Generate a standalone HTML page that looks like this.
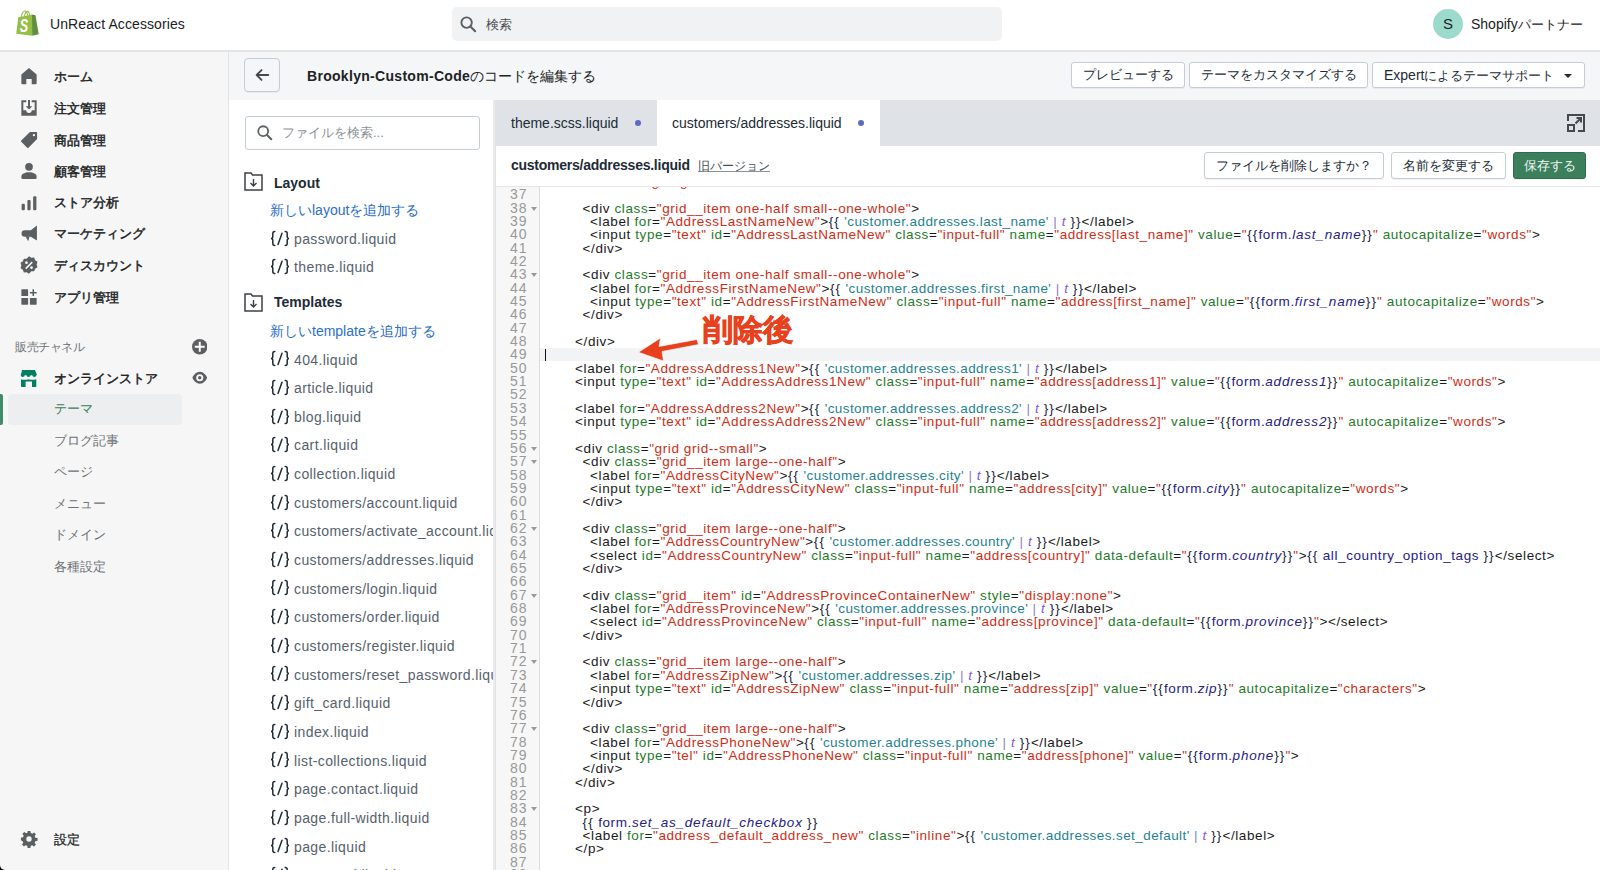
<!DOCTYPE html>
<html lang="ja"><head><meta charset="utf-8">
<style>
*{box-sizing:border-box;margin:0;padding:0}
html,body{width:1600px;height:870px;overflow:hidden;background:#fff}
body{font-family:"Liberation Sans",sans-serif;color:#202223;position:relative}
.abs{position:absolute}
#top{position:absolute;left:0;top:0;width:1600px;height:52px;background:#fff;border-bottom:2px solid #e2e3e5;z-index:2}
#side{position:absolute;left:0;top:52px;width:229px;height:818px;background:#f6f6f7;border-right:1px solid #e1e3e5}
.nv{position:absolute;left:0;height:20px;width:228px;font-size:13px;font-weight:400;line-height:20px;color:#202223}
.nv span{position:absolute;left:54px;top:1px;-webkit-text-stroke:.45px #202223}
.ni{position:absolute;left:19.5px;top:1px;width:18px;height:18px;fill:#5c5f62}
.sb{position:absolute;left:54px;height:20px;line-height:20px;font-size:13px;color:#6d7175}
#hdr{position:absolute;left:229px;top:52px;width:1371px;height:48px;background:#f4f6f8}
.btn{position:absolute;height:26px;border:1px solid #c4cdd5;border-radius:3px;background:#fff;font-size:13px;line-height:24px;color:#212b36;text-align:center;box-shadow:0 1px 0 rgba(22,29,37,.05)}
#files{position:absolute;left:229px;top:100px;width:266px;height:770px;background:#fff}
.fi{position:absolute;left:270px;height:20px;line-height:20px;white-space:nowrap;width:225px;overflow:hidden}
.fi svg{position:absolute;left:0;top:.8px;width:20px;height:17px}
.fi .fn{position:absolute;left:24px;top:0;font-size:14px;color:#56616d;letter-spacing:.4px}
#ed{position:absolute;left:495px;top:100px;width:1105px;height:770px;background:#fff;border-left:1px solid #dfe3e8}
#tabs{position:absolute;left:495px;top:100px;width:1105px;height:46px;background:#dfe3e8}
.tab{position:absolute;top:100px;height:46px;font-size:14px;line-height:46px;color:#212b36}
.dot{position:absolute;width:6px;height:6px;border-radius:3px;background:#5c6ac4}
#gut{position:absolute;left:496px;top:187px;width:44px;height:683px;background:#f7f7f7;border-right:1px solid #ddd}
.gn{position:absolute;left:496px;width:31.4px;text-align:right;height:13.35px;line-height:13.35px;font-size:14px;letter-spacing:.9px;color:#999;font-family:"Liberation Sans",sans-serif}
.fd{position:absolute;left:531px;width:0;height:0;margin-top:5px;border-left:3.5px solid transparent;border-right:3.5px solid transparent;border-top:4px solid #999}
#code{position:absolute;left:0;top:187px;width:1600px;height:683px;overflow:hidden}
#codein{position:absolute;left:0;top:-187px;width:1600px;height:870px}
.cl{position:absolute;white-space:pre;height:13.35px;line-height:13.35px;font-size:13.5px;letter-spacing:.6px;color:#1a1a1a}
.cl i{font-style:normal}
.tg,.eq{color:#1a1a1a}
.at{color:#1e7b2a}
.st{color:#d22c14}
.lb{color:#1b1f3b;letter-spacing:1.1px}
.ls{color:#1f8291;letter-spacing:.42px}
.pp{color:#8d7fc0}
.fl{color:#8456ec;font-style:italic!important}
.lv{color:#25208a}
.lp{color:#25208a;font-style:italic!important;letter-spacing:.8px}
</style></head><body>
<div id="top">
  <svg class="abs" style="left:10px;top:5px;width:35px;height:37px" viewBox="10 5 35 37">
    <path d="M18.3 17.2 32 14.5 32.2 35.8 16.2 33.8z" fill="#95bf47"/>
    <path d="M32 14.5 35.5 15.3 38.7 34.2 32.2 35.8z" fill="#5e8e3e"/>
    <path d="M21.3 16.8c.6-3.5 2-5.8 3.6-5.8 1.5 0 2.4 1.6 2.6 4.3M24.5 16c.5-2.8 1.5-4.6 2.7-4.6s2.1 1.4 2.3 3.7" fill="none" stroke="#95bf47" stroke-width="1.1"/>
    <text transform="translate(19.8 32) scale(.68 1)" font-family="Liberation Sans" font-weight="700" font-style="italic" font-size="18.5" fill="#fff">S</text>
  </svg>
  <div class="abs" style="left:50px;top:14px;font-size:14px;line-height:20px;color:#202223;letter-spacing:.1px">UnReact Accessories</div>
  <div class="abs" style="left:452px;top:7px;width:550px;height:34px;border-radius:5px;background:#f1f2f3"></div>
  <svg class="abs" style="left:459px;top:15px;width:19px;height:19px" viewBox="0 0 20 20"><circle cx="8" cy="8" r="5.5" fill="none" stroke="#5c5f62" stroke-width="2"/><path d="M12 12l5 5" stroke="#5c5f62" stroke-width="2.2" stroke-linecap="round"/></svg>
  <div class="abs" style="left:486px;top:15px;font-size:13px;line-height:20px;color:#4a4d50">検索</div>
  <div class="abs" style="left:1433px;top:9px;width:30px;height:30px;border-radius:15px;background:#9cdbcc;text-align:center;line-height:30px;font-size:15px;color:#202223">S</div>
  <div class="abs" style="left:1471px;top:14px;font-size:14px;line-height:20px;color:#202223;white-space:nowrap">Shopify<span style="font-size:13px">パートナー</span></div>
</div>
<div id="side">
</div>
<div class="nv" style="top:66px"><svg class="ni" viewBox="0 0 20 20"><path d="M10 1 1.5 8.2V18a1.2 1.2 0 0 0 1.2 1.2H7v-6h6v6h4.3a1.2 1.2 0 0 0 1.2-1.2V8.2z"/></svg><span>ホーム</span></div>
<div class="nv" style="top:98px"><svg class="ni" viewBox="0 0 20 20"><path d="M1.5 1.5H7v2.2H3.7v8.8H7a3 3 0 0 0 6 0h3.3V3.7H13V1.5h5.5v17h-17z"/><path d="M8.9 1h2.2v7h2.6L10 11.8 6.3 8h2.6z"/></svg><span>注文管理</span></div>
<div class="nv" style="top:130px"><svg class="ni" viewBox="0 0 20 20"><path d="M11 1h7.2a.8.8 0 0 1 .8.8V9l-9.6 9.6a1 1 0 0 1-1.4 0L1.4 12a1 1 0 0 1 0-1.4zM15.5 3.2a1.3 1.3 0 1 0 0 2.6 1.3 1.3 0 0 0 0-2.6z" fill-rule="evenodd"/></svg><span>商品管理</span></div>
<div class="nv" style="top:161px"><svg class="ni" viewBox="0 0 20 20"><circle cx="10" cy="5.3" r="4.3"/><path d="M1.5 16.5c0-3.2 3.8-5 8.5-5s8.5 1.8 8.5 5v1a1.5 1.5 0 0 1-1.5 1.5H3a1.5 1.5 0 0 1-1.5-1.5z"/></svg><span>顧客管理</span></div>
<div class="nv" style="top:192px"><svg class="ni" viewBox="0 0 20 20"><rect x="1.8" y="12" width="3.6" height="7.3" rx="1.2"/><rect x="8.2" y="7.8" width="3.6" height="11.5" rx="1.2"/><rect x="14.6" y="3.6" width="3.6" height="15.7" rx="1.2"/></svg><span>ストア分析</span></div>
<div class="nv" style="top:223px"><svg class="ni" viewBox="0 0 20 20"><path d="M18.8 1.8v16.4l-6.8-4H5.3a3.6 3.6 0 0 1 0-7.2H12z"/><path d="M6.2 14h4.4l-1.5 5.2z"/></svg><span>マーケティング</span></div>
<div class="nv" style="top:255px"><svg class="ni" viewBox="0 0 20 20"><path d="M10 .2l2.6 1.7 3.1-.1 1.1 2.9 2.6 1.7-.9 3 .9 3-2.6 1.7-1.1 2.9-3.1-.1L10 19.8l-2.6-1.7-3.1.1-1.1-2.9L.6 13.6l.9-3-.9-3 2.6-1.7 1.1-2.9 3.1.1z"/><path d="M13 6.2l1.2 1.2-7.2 7.2-1.2-1.2z" fill="#f6f6f7"/><circle cx="7.2" cy="7.4" r="1.5" fill="#f6f6f7"/><circle cx="12.8" cy="13" r="1.5" fill="#f6f6f7"/></svg><span>ディスカウント</span></div>
<div class="nv" style="top:287px"><svg class="ni" viewBox="0 0 20 20"><rect x="1.5" y="1.5" width="7.5" height="7.5" rx=".6"/><rect x="1.5" y="11" width="7.5" height="7.5" rx=".6"/><rect x="11" y="11" width="7.5" height="7.5" rx=".6"/><path d="M13.9 1.5h1.7v2.9h2.9v1.7h-2.9V9h-1.7V6.1H11V4.4h2.9z"/></svg><span>アプリ管理</span></div>

<div class="abs" style="left:15px;top:337px;font-size:12px;letter-spacing:-.4px;line-height:20px;color:#6d7175">販売チャネル</div>
<svg class="abs" style="left:191.5px;top:339px;width:15.5px;height:15.5px" viewBox="0 0 20 20"><circle cx="10" cy="10" r="10" fill="#5c5f62"/><path d="M10 3.6v12.8M3.6 10h12.8" stroke="#fff" stroke-width="2.5"/></svg>
<div class="nv" style="top:368px"><svg class="abs" style="left:20px;top:1px;width:18px;height:19px;fill:#008060" viewBox="20 369 18 19"><path d="M22 370h13l1.8 4.6v.6h-15.6v-.6z"/><circle cx="22.7" cy="375" r="2"/><circle cx="28.5" cy="375" r="2"/><circle cx="34.3" cy="375" r="2"/><path d="M21 379.2c2.5.8 5 .8 7.6 0 2.5.8 5 .8 7.7 0v7.3c0 .3-.2.5-.5.5H32v-5.6h-6.4V387h-4.1c-.3 0-.5-.2-.5-.5z"/></svg><span>オンラインストア</span></div>
<svg class="abs" style="left:191.5px;top:369.5px;width:15.5px;height:15.5px" viewBox="0 0 20 20"><path d="M10 2.4C5 2.4 1.2 7.5.6 10c.6 2.5 4.4 7.6 9.4 7.6s8.8-5.1 9.4-7.6C18.8 7.5 15 2.4 10 2.4z" fill="#5c5f62"/><circle cx="10" cy="10" r="4.6" fill="#f6f6f7"/><circle cx="10" cy="10" r="2.2" fill="#5c5f62"/></svg>
<div class="abs" style="left:0;top:394px;width:3px;height:31px;background:#3f8c68;border-radius:0 2px 2px 0"></div>
<div class="abs" style="left:8px;top:394px;width:174px;height:31px;background:#edeeef;border-radius:4px"></div>
<div class="sb" style="top:399px;color:#3f7d5a">テーマ</div>
<div class="sb" style="top:430.5px">ブログ記事</div><div class="sb" style="top:462px">ページ</div><div class="sb" style="top:493.5px">メニュー</div><div class="sb" style="top:525px">ドメイン</div><div class="sb" style="top:556.5px">各種設定</div>
<div class="nv" style="top:829px"><svg class="ni" viewBox="0 0 20 20"><path d="M8.5 1h3l.5 2.4 1.6.7 2-1.4 2.1 2.1-1.4 2 .7 1.7 2.5.5v3l-2.5.5-.7 1.7 1.4 2-2.1 2.1-2-1.4-1.6.7-.5 2.4h-3l-.5-2.4-1.7-.7-2 1.4-2.1-2.1 1.4-2-.7-1.7L1 11.5v-3l2.4-.5.7-1.7-1.4-2 2.1-2.1 2 1.4 1.7-.7zM10 7a3 3 0 1 0 0 6 3 3 0 0 0 0-6z" fill-rule="evenodd"/></svg><span style="-webkit-text-stroke:.25px #202223">設定</span></div>
<div class="abs" style="left:0;top:865px;width:5px;height:5px;background:#000"><div style="width:5px;height:5px;background:#f6f6f7;border-bottom-left-radius:5px"></div></div>

<div id="hdr"></div>
<div class="abs" style="left:244px;top:58px;width:36px;height:34px;border:1px solid #c4cdd5;border-radius:4px;box-shadow:0 1px 0 rgba(22,29,37,.05)"></div>
<svg class="abs" style="left:253px;top:66px;width:18px;height:18px" viewBox="0 0 20 20"><path d="M17 10H4M9.5 4.5 4 10l5.5 5.5" fill="none" stroke="#45494d" stroke-width="2" stroke-linecap="round" stroke-linejoin="round"/></svg>
<div class="abs" style="left:307px;top:66px;font-size:14px;line-height:20px;color:#202223;white-space:nowrap"><b style="font-weight:700;letter-spacing:.3px">Brooklyn-Custom-Code</b><span style="font-size:14px">のコードを編集する</span></div>
<div class="btn" style="left:1071px;top:62px;width:114px">プレビューする</div>
<div class="btn" style="left:1189px;top:62px;width:179px">テーマをカスタマイズする</div>
<div class="btn" style="left:1372px;top:62px;width:213px;text-align:left;padding-left:11px"><span style="font-size:14px">Expert</span>によるテーマサポート<span style="position:absolute;left:191px;top:11px;border-left:4px solid transparent;border-right:4px solid transparent;border-top:4px solid #212b36"></span></div>

<div id="files"></div>
<div class="abs" style="left:245px;top:116px;width:235px;height:34px;border:1px solid #c4cdd5;border-radius:3px;background:#fff"></div>
<svg class="abs" style="left:256px;top:124px;width:18px;height:18px" viewBox="0 0 20 20"><circle cx="8" cy="8" r="5.5" fill="none" stroke="#5c5f62" stroke-width="2"/><path d="M12 12l5 5" stroke="#5c5f62" stroke-width="2.2" stroke-linecap="round"/></svg>
<div class="abs" style="left:282px;top:123px;font-size:13px;line-height:20px;color:#8c9196">ファイルを検索...</div>

<svg class="abs" style="left:244px;top:172px;width:19px;height:19px" viewBox="0 0 19 19"><path d="M1 1h6l1.5 2H18v15H1z" fill="none" stroke="#3d4246" stroke-width="1.5"/><path d="M9.5 7v7M6.5 11l3 3 3-3" fill="none" stroke="#3d4246" stroke-width="1.4"/></svg>
<div class="abs" style="left:274px;top:173px;font-size:14px;line-height:20px;font-weight:700;color:#212b36">Layout</div>
<div class="abs" style="left:270px;top:200px;font-size:14px;line-height:20px;color:#2c6ecb;white-space:nowrap">新しいlayoutを追加する</div>
<svg class="abs" style="left:244px;top:293px;width:19px;height:19px" viewBox="0 0 19 19"><path d="M1 1h6l1.5 2H18v15H1z" fill="none" stroke="#3d4246" stroke-width="1.5"/><path d="M9.5 7v7M6.5 11l3 3 3-3" fill="none" stroke="#3d4246" stroke-width="1.4"/></svg>
<div class="abs" style="left:274px;top:292px;font-size:14px;line-height:20px;font-weight:700;color:#212b36">Templates</div>
<div class="abs" style="left:270px;top:321px;font-size:14px;line-height:20px;color:#2c6ecb;white-space:nowrap">新しいtemplateを追加する</div>
<div class="fi" style="top:228.8px"><svg viewBox="0 0 20 17"><path d="M4.8 1.5C3.2 1.5 2.8 2.2 2.8 3.5v3c0 1.2-.6 2-1.8 2 1.2 0 1.8.8 1.8 2v3c0 1.3.4 2 2 2M15.2 1.5c1.6 0 2 .7 2 2v3c0 1.2.6 2 1.8 2-1.2 0-1.8.8-1.8 2v3c0 1.3-.4 2-2 2M12 3.2 8 14.5" fill="none" stroke="#212b36" stroke-width="1.5" stroke-linecap="round"/></svg><span class="fn">password.liquid</span></div>
<div class="fi" style="top:257.3px"><svg viewBox="0 0 20 17"><path d="M4.8 1.5C3.2 1.5 2.8 2.2 2.8 3.5v3c0 1.2-.6 2-1.8 2 1.2 0 1.8.8 1.8 2v3c0 1.3.4 2 2 2M15.2 1.5c1.6 0 2 .7 2 2v3c0 1.2.6 2 1.8 2-1.2 0-1.8.8-1.8 2v3c0 1.3-.4 2-2 2M12 3.2 8 14.5" fill="none" stroke="#212b36" stroke-width="1.5" stroke-linecap="round"/></svg><span class="fn">theme.liquid</span></div>
<div class="fi" style="top:349.5px"><svg viewBox="0 0 20 17"><path d="M4.8 1.5C3.2 1.5 2.8 2.2 2.8 3.5v3c0 1.2-.6 2-1.8 2 1.2 0 1.8.8 1.8 2v3c0 1.3.4 2 2 2M15.2 1.5c1.6 0 2 .7 2 2v3c0 1.2.6 2 1.8 2-1.2 0-1.8.8-1.8 2v3c0 1.3-.4 2-2 2M12 3.2 8 14.5" fill="none" stroke="#212b36" stroke-width="1.5" stroke-linecap="round"/></svg><span class="fn">404.liquid</span></div>
<div class="fi" style="top:378.1px"><svg viewBox="0 0 20 17"><path d="M4.8 1.5C3.2 1.5 2.8 2.2 2.8 3.5v3c0 1.2-.6 2-1.8 2 1.2 0 1.8.8 1.8 2v3c0 1.3.4 2 2 2M15.2 1.5c1.6 0 2 .7 2 2v3c0 1.2.6 2 1.8 2-1.2 0-1.8.8-1.8 2v3c0 1.3-.4 2-2 2M12 3.2 8 14.5" fill="none" stroke="#212b36" stroke-width="1.5" stroke-linecap="round"/></svg><span class="fn">article.liquid</span></div>
<div class="fi" style="top:406.8px"><svg viewBox="0 0 20 17"><path d="M4.8 1.5C3.2 1.5 2.8 2.2 2.8 3.5v3c0 1.2-.6 2-1.8 2 1.2 0 1.8.8 1.8 2v3c0 1.3.4 2 2 2M15.2 1.5c1.6 0 2 .7 2 2v3c0 1.2.6 2 1.8 2-1.2 0-1.8.8-1.8 2v3c0 1.3-.4 2-2 2M12 3.2 8 14.5" fill="none" stroke="#212b36" stroke-width="1.5" stroke-linecap="round"/></svg><span class="fn">blog.liquid</span></div>
<div class="fi" style="top:435.4px"><svg viewBox="0 0 20 17"><path d="M4.8 1.5C3.2 1.5 2.8 2.2 2.8 3.5v3c0 1.2-.6 2-1.8 2 1.2 0 1.8.8 1.8 2v3c0 1.3.4 2 2 2M15.2 1.5c1.6 0 2 .7 2 2v3c0 1.2.6 2 1.8 2-1.2 0-1.8.8-1.8 2v3c0 1.3-.4 2-2 2M12 3.2 8 14.5" fill="none" stroke="#212b36" stroke-width="1.5" stroke-linecap="round"/></svg><span class="fn">cart.liquid</span></div>
<div class="fi" style="top:464.1px"><svg viewBox="0 0 20 17"><path d="M4.8 1.5C3.2 1.5 2.8 2.2 2.8 3.5v3c0 1.2-.6 2-1.8 2 1.2 0 1.8.8 1.8 2v3c0 1.3.4 2 2 2M15.2 1.5c1.6 0 2 .7 2 2v3c0 1.2.6 2 1.8 2-1.2 0-1.8.8-1.8 2v3c0 1.3-.4 2-2 2M12 3.2 8 14.5" fill="none" stroke="#212b36" stroke-width="1.5" stroke-linecap="round"/></svg><span class="fn">collection.liquid</span></div>
<div class="fi" style="top:492.8px"><svg viewBox="0 0 20 17"><path d="M4.8 1.5C3.2 1.5 2.8 2.2 2.8 3.5v3c0 1.2-.6 2-1.8 2 1.2 0 1.8.8 1.8 2v3c0 1.3.4 2 2 2M15.2 1.5c1.6 0 2 .7 2 2v3c0 1.2.6 2 1.8 2-1.2 0-1.8.8-1.8 2v3c0 1.3-.4 2-2 2M12 3.2 8 14.5" fill="none" stroke="#212b36" stroke-width="1.5" stroke-linecap="round"/></svg><span class="fn">customers/account.liquid</span></div>
<div class="fi" style="top:521.4px"><svg viewBox="0 0 20 17"><path d="M4.8 1.5C3.2 1.5 2.8 2.2 2.8 3.5v3c0 1.2-.6 2-1.8 2 1.2 0 1.8.8 1.8 2v3c0 1.3.4 2 2 2M15.2 1.5c1.6 0 2 .7 2 2v3c0 1.2.6 2 1.8 2-1.2 0-1.8.8-1.8 2v3c0 1.3-.4 2-2 2M12 3.2 8 14.5" fill="none" stroke="#212b36" stroke-width="1.5" stroke-linecap="round"/></svg><span class="fn">customers/activate_account.liquid</span></div>
<div class="fi" style="top:550.0px"><svg viewBox="0 0 20 17"><path d="M4.8 1.5C3.2 1.5 2.8 2.2 2.8 3.5v3c0 1.2-.6 2-1.8 2 1.2 0 1.8.8 1.8 2v3c0 1.3.4 2 2 2M15.2 1.5c1.6 0 2 .7 2 2v3c0 1.2.6 2 1.8 2-1.2 0-1.8.8-1.8 2v3c0 1.3-.4 2-2 2M12 3.2 8 14.5" fill="none" stroke="#212b36" stroke-width="1.5" stroke-linecap="round"/></svg><span class="fn">customers/addresses.liquid</span></div>
<div class="fi" style="top:578.7px"><svg viewBox="0 0 20 17"><path d="M4.8 1.5C3.2 1.5 2.8 2.2 2.8 3.5v3c0 1.2-.6 2-1.8 2 1.2 0 1.8.8 1.8 2v3c0 1.3.4 2 2 2M15.2 1.5c1.6 0 2 .7 2 2v3c0 1.2.6 2 1.8 2-1.2 0-1.8.8-1.8 2v3c0 1.3-.4 2-2 2M12 3.2 8 14.5" fill="none" stroke="#212b36" stroke-width="1.5" stroke-linecap="round"/></svg><span class="fn">customers/login.liquid</span></div>
<div class="fi" style="top:607.3px"><svg viewBox="0 0 20 17"><path d="M4.8 1.5C3.2 1.5 2.8 2.2 2.8 3.5v3c0 1.2-.6 2-1.8 2 1.2 0 1.8.8 1.8 2v3c0 1.3.4 2 2 2M15.2 1.5c1.6 0 2 .7 2 2v3c0 1.2.6 2 1.8 2-1.2 0-1.8.8-1.8 2v3c0 1.3-.4 2-2 2M12 3.2 8 14.5" fill="none" stroke="#212b36" stroke-width="1.5" stroke-linecap="round"/></svg><span class="fn">customers/order.liquid</span></div>
<div class="fi" style="top:636.0px"><svg viewBox="0 0 20 17"><path d="M4.8 1.5C3.2 1.5 2.8 2.2 2.8 3.5v3c0 1.2-.6 2-1.8 2 1.2 0 1.8.8 1.8 2v3c0 1.3.4 2 2 2M15.2 1.5c1.6 0 2 .7 2 2v3c0 1.2.6 2 1.8 2-1.2 0-1.8.8-1.8 2v3c0 1.3-.4 2-2 2M12 3.2 8 14.5" fill="none" stroke="#212b36" stroke-width="1.5" stroke-linecap="round"/></svg><span class="fn">customers/register.liquid</span></div>
<div class="fi" style="top:664.6px"><svg viewBox="0 0 20 17"><path d="M4.8 1.5C3.2 1.5 2.8 2.2 2.8 3.5v3c0 1.2-.6 2-1.8 2 1.2 0 1.8.8 1.8 2v3c0 1.3.4 2 2 2M15.2 1.5c1.6 0 2 .7 2 2v3c0 1.2.6 2 1.8 2-1.2 0-1.8.8-1.8 2v3c0 1.3-.4 2-2 2M12 3.2 8 14.5" fill="none" stroke="#212b36" stroke-width="1.5" stroke-linecap="round"/></svg><span class="fn">customers/reset_password.liquid</span></div>
<div class="fi" style="top:693.3px"><svg viewBox="0 0 20 17"><path d="M4.8 1.5C3.2 1.5 2.8 2.2 2.8 3.5v3c0 1.2-.6 2-1.8 2 1.2 0 1.8.8 1.8 2v3c0 1.3.4 2 2 2M15.2 1.5c1.6 0 2 .7 2 2v3c0 1.2.6 2 1.8 2-1.2 0-1.8.8-1.8 2v3c0 1.3-.4 2-2 2M12 3.2 8 14.5" fill="none" stroke="#212b36" stroke-width="1.5" stroke-linecap="round"/></svg><span class="fn">gift_card.liquid</span></div>
<div class="fi" style="top:722.0px"><svg viewBox="0 0 20 17"><path d="M4.8 1.5C3.2 1.5 2.8 2.2 2.8 3.5v3c0 1.2-.6 2-1.8 2 1.2 0 1.8.8 1.8 2v3c0 1.3.4 2 2 2M15.2 1.5c1.6 0 2 .7 2 2v3c0 1.2.6 2 1.8 2-1.2 0-1.8.8-1.8 2v3c0 1.3-.4 2-2 2M12 3.2 8 14.5" fill="none" stroke="#212b36" stroke-width="1.5" stroke-linecap="round"/></svg><span class="fn">index.liquid</span></div>
<div class="fi" style="top:750.6px"><svg viewBox="0 0 20 17"><path d="M4.8 1.5C3.2 1.5 2.8 2.2 2.8 3.5v3c0 1.2-.6 2-1.8 2 1.2 0 1.8.8 1.8 2v3c0 1.3.4 2 2 2M15.2 1.5c1.6 0 2 .7 2 2v3c0 1.2.6 2 1.8 2-1.2 0-1.8.8-1.8 2v3c0 1.3-.4 2-2 2M12 3.2 8 14.5" fill="none" stroke="#212b36" stroke-width="1.5" stroke-linecap="round"/></svg><span class="fn">list-collections.liquid</span></div>
<div class="fi" style="top:779.2px"><svg viewBox="0 0 20 17"><path d="M4.8 1.5C3.2 1.5 2.8 2.2 2.8 3.5v3c0 1.2-.6 2-1.8 2 1.2 0 1.8.8 1.8 2v3c0 1.3.4 2 2 2M15.2 1.5c1.6 0 2 .7 2 2v3c0 1.2.6 2 1.8 2-1.2 0-1.8.8-1.8 2v3c0 1.3-.4 2-2 2M12 3.2 8 14.5" fill="none" stroke="#212b36" stroke-width="1.5" stroke-linecap="round"/></svg><span class="fn">page.contact.liquid</span></div>
<div class="fi" style="top:807.9px"><svg viewBox="0 0 20 17"><path d="M4.8 1.5C3.2 1.5 2.8 2.2 2.8 3.5v3c0 1.2-.6 2-1.8 2 1.2 0 1.8.8 1.8 2v3c0 1.3.4 2 2 2M15.2 1.5c1.6 0 2 .7 2 2v3c0 1.2.6 2 1.8 2-1.2 0-1.8.8-1.8 2v3c0 1.3-.4 2-2 2M12 3.2 8 14.5" fill="none" stroke="#212b36" stroke-width="1.5" stroke-linecap="round"/></svg><span class="fn">page.full-width.liquid</span></div>
<div class="fi" style="top:836.5px"><svg viewBox="0 0 20 17"><path d="M4.8 1.5C3.2 1.5 2.8 2.2 2.8 3.5v3c0 1.2-.6 2-1.8 2 1.2 0 1.8.8 1.8 2v3c0 1.3.4 2 2 2M15.2 1.5c1.6 0 2 .7 2 2v3c0 1.2.6 2 1.8 2-1.2 0-1.8.8-1.8 2v3c0 1.3-.4 2-2 2M12 3.2 8 14.5" fill="none" stroke="#212b36" stroke-width="1.5" stroke-linecap="round"/></svg><span class="fn">page.liquid</span></div>
<div class="fi" style="top:865.2px"><svg viewBox="0 0 20 17"><path d="M4.8 1.5C3.2 1.5 2.8 2.2 2.8 3.5v3c0 1.2-.6 2-1.8 2 1.2 0 1.8.8 1.8 2v3c0 1.3.4 2 2 2M15.2 1.5c1.6 0 2 .7 2 2v3c0 1.2.6 2 1.8 2-1.2 0-1.8.8-1.8 2v3c0 1.3-.4 2-2 2M12 3.2 8 14.5" fill="none" stroke="#212b36" stroke-width="1.5" stroke-linecap="round"/></svg><span class="fn">password.liquid</span></div>
<div class="abs" style="left:493px;top:100px;width:2px;height:770px;background:#ebebeb"></div>

<div id="ed"></div>
<div id="tabs"></div>
<div class="tab" style="left:511px">theme.scss.liquid</div>
<div class="dot" style="left:634.5px;top:120px"></div>
<div class="abs" style="left:657px;top:100px;width:223px;height:46px;background:#fff"></div>
<div class="tab" style="left:672px">customers/addresses.liquid</div>
<div class="dot" style="left:857.5px;top:120px"></div>
<svg class="abs" style="left:1566px;top:113px;width:20px;height:20px" viewBox="0 0 20 20"><path d="M2 8V2h16v16h-6" fill="none" stroke="#45494d" stroke-width="2"/><rect x="2" y="12" width="6" height="6" fill="none" stroke="#45494d" stroke-width="2"/><path d="M9.5 10.5 14.5 5.5M10.5 5h4.5v4.5" fill="none" stroke="#45494d" stroke-width="2"/></svg>

<div class="abs" style="left:511px;top:155px;font-size:14px;line-height:20px;font-weight:700;color:#212b36;letter-spacing:-.25px">customers/addresses.liquid</div>
<div class="abs" style="left:698px;top:156px;font-size:12.2px;line-height:20px;color:#454f5b;text-decoration:underline;text-decoration-color:#8c9196">旧バージョン</div>
<div class="btn" style="left:1204px;top:152px;width:180px;height:27px;line-height:25px">ファイルを削除しますか？</div>
<div class="btn" style="left:1391px;top:152px;width:115px;height:27px;line-height:25px">名前を変更する</div>
<div class="btn" style="left:1513px;top:152px;width:73px;height:27px;line-height:25px;background:#3b7f5d;border-color:#2f6b4e;color:#f0f5f2">保存する</div>
<div class="abs" style="left:495px;top:186px;width:1105px;height:1px;background:#e6e6e6"></div>

<div id="code"><div id="codein">
<div id="gut" style="top:187px"></div>
<div class="abs" style="left:540px;top:348px;width:1060px;height:13px;background:#f2f3f5"></div>
<div class="abs" style="left:544.5px;top:348.5px;width:1px;height:12px;background:#111"></div>
<div class="gn" style="top:188.23px">37</div>
<div class="gn" style="top:201.58px">38</div>
<div class="fd" style="top:201.58px"></div>
<div class="cl" style="top:201.58px;left:582.58px"><i class="tg">&lt;div</i> <i class="at">class</i><i class="eq">=</i><i class="st">"grid__item one-half small--one-whole"</i><i class="tg">&gt;</i></div>
<div class="gn" style="top:214.93px">39</div>
<div class="cl" style="top:214.93px;left:590.10px"><i class="tg">&lt;label</i> <i class="at">for</i><i class="eq">=</i><i class="st">"AddressLastNameNew"</i><i class="tg">&gt;</i><i class="lb">{{</i> <i class="ls">'customer.addresses.last_name'</i> <i class="pp">|</i> <i class="fl">t</i> <i class="lb">}}</i><i class="tg">&lt;/label</i><i class="tg">&gt;</i></div>
<div class="gn" style="top:228.28px">40</div>
<div class="cl" style="top:228.28px;left:590.10px"><i class="tg">&lt;input</i> <i class="at">type</i><i class="eq">=</i><i class="st">"text"</i> <i class="at">id</i><i class="eq">=</i><i class="st">"AddressLastNameNew"</i> <i class="at">class</i><i class="eq">=</i><i class="st">"input-full"</i> <i class="at">name</i><i class="eq">=</i><i class="st">"address[last_name]"</i> <i class="at">value</i><i class="eq">=</i><i class="st">"</i><i class="lb">{{</i><i class="lv">form.</i><i class="lp">last_name</i><i class="lb">}}</i><i class="st">"</i> <i class="at">autocapitalize</i><i class="eq">=</i><i class="st">"words"</i><i class="tg">&gt;</i></div>
<div class="gn" style="top:241.63px">41</div>
<div class="cl" style="top:241.63px;left:582.58px"><i class="tg">&lt;/div</i><i class="tg">&gt;</i></div>
<div class="gn" style="top:254.98px">42</div>
<div class="gn" style="top:268.33px">43</div>
<div class="fd" style="top:268.33px"></div>
<div class="cl" style="top:268.33px;left:582.58px"><i class="tg">&lt;div</i> <i class="at">class</i><i class="eq">=</i><i class="st">"grid__item one-half small--one-whole"</i><i class="tg">&gt;</i></div>
<div class="gn" style="top:281.68px">44</div>
<div class="cl" style="top:281.68px;left:590.10px"><i class="tg">&lt;label</i> <i class="at">for</i><i class="eq">=</i><i class="st">"AddressFirstNameNew"</i><i class="tg">&gt;</i><i class="lb">{{</i> <i class="ls">'customer.addresses.first_name'</i> <i class="pp">|</i> <i class="fl">t</i> <i class="lb">}}</i><i class="tg">&lt;/label</i><i class="tg">&gt;</i></div>
<div class="gn" style="top:295.03px">45</div>
<div class="cl" style="top:295.03px;left:590.10px"><i class="tg">&lt;input</i> <i class="at">type</i><i class="eq">=</i><i class="st">"text"</i> <i class="at">id</i><i class="eq">=</i><i class="st">"AddressFirstNameNew"</i> <i class="at">class</i><i class="eq">=</i><i class="st">"input-full"</i> <i class="at">name</i><i class="eq">=</i><i class="st">"address[first_name]"</i> <i class="at">value</i><i class="eq">=</i><i class="st">"</i><i class="lb">{{</i><i class="lv">form.</i><i class="lp">first_name</i><i class="lb">}}</i><i class="st">"</i> <i class="at">autocapitalize</i><i class="eq">=</i><i class="st">"words"</i><i class="tg">&gt;</i></div>
<div class="gn" style="top:308.38px">46</div>
<div class="cl" style="top:308.38px;left:582.58px"><i class="tg">&lt;/div</i><i class="tg">&gt;</i></div>
<div class="gn" style="top:321.73px">47</div>
<div class="gn" style="top:335.08px">48</div>
<div class="cl" style="top:335.08px;left:575.06px"><i class="tg">&lt;/div</i><i class="tg">&gt;</i></div>
<div class="gn" style="top:348.43px">49</div>
<div class="gn" style="top:361.78px">50</div>
<div class="cl" style="top:361.78px;left:575.06px"><i class="tg">&lt;label</i> <i class="at">for</i><i class="eq">=</i><i class="st">"AddressAddress1New"</i><i class="tg">&gt;</i><i class="lb">{{</i> <i class="ls">'customer.addresses.address1'</i> <i class="pp">|</i> <i class="fl">t</i> <i class="lb">}}</i><i class="tg">&lt;/label</i><i class="tg">&gt;</i></div>
<div class="gn" style="top:375.13px">51</div>
<div class="cl" style="top:375.13px;left:575.06px"><i class="tg">&lt;input</i> <i class="at">type</i><i class="eq">=</i><i class="st">"text"</i> <i class="at">id</i><i class="eq">=</i><i class="st">"AddressAddress1New"</i> <i class="at">class</i><i class="eq">=</i><i class="st">"input-full"</i> <i class="at">name</i><i class="eq">=</i><i class="st">"address[address1]"</i> <i class="at">value</i><i class="eq">=</i><i class="st">"</i><i class="lb">{{</i><i class="lv">form.</i><i class="lp">address1</i><i class="lb">}}</i><i class="st">"</i> <i class="at">autocapitalize</i><i class="eq">=</i><i class="st">"words"</i><i class="tg">&gt;</i></div>
<div class="gn" style="top:388.48px">52</div>
<div class="gn" style="top:401.83px">53</div>
<div class="cl" style="top:401.83px;left:575.06px"><i class="tg">&lt;label</i> <i class="at">for</i><i class="eq">=</i><i class="st">"AddressAddress2New"</i><i class="tg">&gt;</i><i class="lb">{{</i> <i class="ls">'customer.addresses.address2'</i> <i class="pp">|</i> <i class="fl">t</i> <i class="lb">}}</i><i class="tg">&lt;/label</i><i class="tg">&gt;</i></div>
<div class="gn" style="top:415.18px">54</div>
<div class="cl" style="top:415.18px;left:575.06px"><i class="tg">&lt;input</i> <i class="at">type</i><i class="eq">=</i><i class="st">"text"</i> <i class="at">id</i><i class="eq">=</i><i class="st">"AddressAddress2New"</i> <i class="at">class</i><i class="eq">=</i><i class="st">"input-full"</i> <i class="at">name</i><i class="eq">=</i><i class="st">"address[address2]"</i> <i class="at">value</i><i class="eq">=</i><i class="st">"</i><i class="lb">{{</i><i class="lv">form.</i><i class="lp">address2</i><i class="lb">}}</i><i class="st">"</i> <i class="at">autocapitalize</i><i class="eq">=</i><i class="st">"words"</i><i class="tg">&gt;</i></div>
<div class="gn" style="top:428.53px">55</div>
<div class="gn" style="top:441.88px">56</div>
<div class="fd" style="top:441.88px"></div>
<div class="cl" style="top:441.88px;left:575.06px"><i class="tg">&lt;div</i> <i class="at">class</i><i class="eq">=</i><i class="st">"grid grid--small"</i><i class="tg">&gt;</i></div>
<div class="gn" style="top:455.23px">57</div>
<div class="fd" style="top:455.23px"></div>
<div class="cl" style="top:455.23px;left:582.58px"><i class="tg">&lt;div</i> <i class="at">class</i><i class="eq">=</i><i class="st">"grid__item large--one-half"</i><i class="tg">&gt;</i></div>
<div class="gn" style="top:468.58px">58</div>
<div class="cl" style="top:468.58px;left:590.10px"><i class="tg">&lt;label</i> <i class="at">for</i><i class="eq">=</i><i class="st">"AddressCityNew"</i><i class="tg">&gt;</i><i class="lb">{{</i> <i class="ls">'customer.addresses.city'</i> <i class="pp">|</i> <i class="fl">t</i> <i class="lb">}}</i><i class="tg">&lt;/label</i><i class="tg">&gt;</i></div>
<div class="gn" style="top:481.93px">59</div>
<div class="cl" style="top:481.93px;left:590.10px"><i class="tg">&lt;input</i> <i class="at">type</i><i class="eq">=</i><i class="st">"text"</i> <i class="at">id</i><i class="eq">=</i><i class="st">"AddressCityNew"</i> <i class="at">class</i><i class="eq">=</i><i class="st">"input-full"</i> <i class="at">name</i><i class="eq">=</i><i class="st">"address[city]"</i> <i class="at">value</i><i class="eq">=</i><i class="st">"</i><i class="lb">{{</i><i class="lv">form.</i><i class="lp">city</i><i class="lb">}}</i><i class="st">"</i> <i class="at">autocapitalize</i><i class="eq">=</i><i class="st">"words"</i><i class="tg">&gt;</i></div>
<div class="gn" style="top:495.28px">60</div>
<div class="cl" style="top:495.28px;left:582.58px"><i class="tg">&lt;/div</i><i class="tg">&gt;</i></div>
<div class="gn" style="top:508.63px">61</div>
<div class="gn" style="top:521.98px">62</div>
<div class="fd" style="top:521.98px"></div>
<div class="cl" style="top:521.98px;left:582.58px"><i class="tg">&lt;div</i> <i class="at">class</i><i class="eq">=</i><i class="st">"grid__item large--one-half"</i><i class="tg">&gt;</i></div>
<div class="gn" style="top:535.33px">63</div>
<div class="cl" style="top:535.33px;left:590.10px"><i class="tg">&lt;label</i> <i class="at">for</i><i class="eq">=</i><i class="st">"AddressCountryNew"</i><i class="tg">&gt;</i><i class="lb">{{</i> <i class="ls">'customer.addresses.country'</i> <i class="pp">|</i> <i class="fl">t</i> <i class="lb">}}</i><i class="tg">&lt;/label</i><i class="tg">&gt;</i></div>
<div class="gn" style="top:548.68px">64</div>
<div class="cl" style="top:548.68px;left:590.10px"><i class="tg">&lt;select</i> <i class="at">id</i><i class="eq">=</i><i class="st">"AddressCountryNew"</i> <i class="at">class</i><i class="eq">=</i><i class="st">"input-full"</i> <i class="at">name</i><i class="eq">=</i><i class="st">"address[country]"</i> <i class="at">data-default</i><i class="eq">=</i><i class="st">"</i><i class="lb">{{</i><i class="lv">form.</i><i class="lp">country</i><i class="lb">}}</i><i class="st">"</i><i class="tg">&gt;</i><i class="lb">{{</i> <i class="lv">all_country_option_tags</i> <i class="lb">}}</i><i class="tg">&lt;/select</i><i class="tg">&gt;</i></div>
<div class="gn" style="top:562.03px">65</div>
<div class="cl" style="top:562.03px;left:582.58px"><i class="tg">&lt;/div</i><i class="tg">&gt;</i></div>
<div class="gn" style="top:575.38px">66</div>
<div class="gn" style="top:588.73px">67</div>
<div class="fd" style="top:588.73px"></div>
<div class="cl" style="top:588.73px;left:582.58px"><i class="tg">&lt;div</i> <i class="at">class</i><i class="eq">=</i><i class="st">"grid__item"</i> <i class="at">id</i><i class="eq">=</i><i class="st">"AddressProvinceContainerNew"</i> <i class="at">style</i><i class="eq">=</i><i class="st">"display:none"</i><i class="tg">&gt;</i></div>
<div class="gn" style="top:602.08px">68</div>
<div class="cl" style="top:602.08px;left:590.10px"><i class="tg">&lt;label</i> <i class="at">for</i><i class="eq">=</i><i class="st">"AddressProvinceNew"</i><i class="tg">&gt;</i><i class="lb">{{</i> <i class="ls">'customer.addresses.province'</i> <i class="pp">|</i> <i class="fl">t</i> <i class="lb">}}</i><i class="tg">&lt;/label</i><i class="tg">&gt;</i></div>
<div class="gn" style="top:615.43px">69</div>
<div class="cl" style="top:615.43px;left:590.10px"><i class="tg">&lt;select</i> <i class="at">id</i><i class="eq">=</i><i class="st">"AddressProvinceNew"</i> <i class="at">class</i><i class="eq">=</i><i class="st">"input-full"</i> <i class="at">name</i><i class="eq">=</i><i class="st">"address[province]"</i> <i class="at">data-default</i><i class="eq">=</i><i class="st">"</i><i class="lb">{{</i><i class="lv">form.</i><i class="lp">province</i><i class="lb">}}</i><i class="st">"</i><i class="tg">&gt;</i><i class="tg">&lt;/select</i><i class="tg">&gt;</i></div>
<div class="gn" style="top:628.78px">70</div>
<div class="cl" style="top:628.78px;left:582.58px"><i class="tg">&lt;/div</i><i class="tg">&gt;</i></div>
<div class="gn" style="top:642.13px">71</div>
<div class="gn" style="top:655.48px">72</div>
<div class="fd" style="top:655.48px"></div>
<div class="cl" style="top:655.48px;left:582.58px"><i class="tg">&lt;div</i> <i class="at">class</i><i class="eq">=</i><i class="st">"grid__item large--one-half"</i><i class="tg">&gt;</i></div>
<div class="gn" style="top:668.83px">73</div>
<div class="cl" style="top:668.83px;left:590.10px"><i class="tg">&lt;label</i> <i class="at">for</i><i class="eq">=</i><i class="st">"AddressZipNew"</i><i class="tg">&gt;</i><i class="lb">{{</i> <i class="ls">'customer.addresses.zip'</i> <i class="pp">|</i> <i class="fl">t</i> <i class="lb">}}</i><i class="tg">&lt;/label</i><i class="tg">&gt;</i></div>
<div class="gn" style="top:682.18px">74</div>
<div class="cl" style="top:682.18px;left:590.10px"><i class="tg">&lt;input</i> <i class="at">type</i><i class="eq">=</i><i class="st">"text"</i> <i class="at">id</i><i class="eq">=</i><i class="st">"AddressZipNew"</i> <i class="at">class</i><i class="eq">=</i><i class="st">"input-full"</i> <i class="at">name</i><i class="eq">=</i><i class="st">"address[zip]"</i> <i class="at">value</i><i class="eq">=</i><i class="st">"</i><i class="lb">{{</i><i class="lv">form.</i><i class="lp">zip</i><i class="lb">}}</i><i class="st">"</i> <i class="at">autocapitalize</i><i class="eq">=</i><i class="st">"characters"</i><i class="tg">&gt;</i></div>
<div class="gn" style="top:695.53px">75</div>
<div class="cl" style="top:695.53px;left:582.58px"><i class="tg">&lt;/div</i><i class="tg">&gt;</i></div>
<div class="gn" style="top:708.88px">76</div>
<div class="gn" style="top:722.23px">77</div>
<div class="fd" style="top:722.23px"></div>
<div class="cl" style="top:722.23px;left:582.58px"><i class="tg">&lt;div</i> <i class="at">class</i><i class="eq">=</i><i class="st">"grid__item large--one-half"</i><i class="tg">&gt;</i></div>
<div class="gn" style="top:735.58px">78</div>
<div class="cl" style="top:735.58px;left:590.10px"><i class="tg">&lt;label</i> <i class="at">for</i><i class="eq">=</i><i class="st">"AddressPhoneNew"</i><i class="tg">&gt;</i><i class="lb">{{</i> <i class="ls">'customer.addresses.phone'</i> <i class="pp">|</i> <i class="fl">t</i> <i class="lb">}}</i><i class="tg">&lt;/label</i><i class="tg">&gt;</i></div>
<div class="gn" style="top:748.93px">79</div>
<div class="cl" style="top:748.93px;left:590.10px"><i class="tg">&lt;input</i> <i class="at">type</i><i class="eq">=</i><i class="st">"tel"</i> <i class="at">id</i><i class="eq">=</i><i class="st">"AddressPhoneNew"</i> <i class="at">class</i><i class="eq">=</i><i class="st">"input-full"</i> <i class="at">name</i><i class="eq">=</i><i class="st">"address[phone]"</i> <i class="at">value</i><i class="eq">=</i><i class="st">"</i><i class="lb">{{</i><i class="lv">form.</i><i class="lp">phone</i><i class="lb">}}</i><i class="st">"</i><i class="tg">&gt;</i></div>
<div class="gn" style="top:762.28px">80</div>
<div class="cl" style="top:762.28px;left:582.58px"><i class="tg">&lt;/div</i><i class="tg">&gt;</i></div>
<div class="gn" style="top:775.63px">81</div>
<div class="cl" style="top:775.63px;left:575.06px"><i class="tg">&lt;/div</i><i class="tg">&gt;</i></div>
<div class="gn" style="top:788.98px">82</div>
<div class="gn" style="top:802.33px">83</div>
<div class="fd" style="top:802.33px"></div>
<div class="cl" style="top:802.33px;left:575.06px"><i class="tg">&lt;p</i><i class="tg">&gt;</i></div>
<div class="gn" style="top:815.68px">84</div>
<div class="cl" style="top:815.68px;left:582.58px"><i class="lb">{{</i> <i class="lv">form.</i><i class="lp">set_as_default_checkbox</i> <i class="lb">}}</i></div>
<div class="gn" style="top:829.03px">85</div>
<div class="cl" style="top:829.03px;left:582.58px"><i class="tg">&lt;label</i> <i class="at">for</i><i class="eq">=</i><i class="st">"address_default_address_new"</i> <i class="at">class</i><i class="eq">=</i><i class="st">"inline"</i><i class="tg">&gt;</i><i class="lb">{{</i> <i class="ls">'customer.addresses.set_default'</i> <i class="pp">|</i> <i class="fl">t</i> <i class="lb">}}</i><i class="tg">&lt;/label</i><i class="tg">&gt;</i></div>
<div class="gn" style="top:842.38px">86</div>
<div class="cl" style="top:842.38px;left:575.06px"><i class="tg">&lt;/p</i><i class="tg">&gt;</i></div>
<div class="gn" style="top:855.73px">87</div>
<div class="gn" style="top:867.88px">88</div>
<div class="cl" style="top:867.88px;left:575.06px"><i class="tg">&lt;input</i> <i class="at">type</i><i class="eq">=</i><i class="st">"submit"</i> <i class="at">value</i><i class="eq">=</i><i class="st">"</i><i class="lb">{{</i> <i class="ls">'customer.addresses.add'</i> <i class="pp">|</i> <i class="fl">t</i> <i class="lb">}}</i><i class="st">"</i> <i class="at">class</i><i class="eq">=</i><i class="st">"btn"</i><i class="tg">&gt;</i></div>
<div class="cl" style="top:174.88px;left:651.5px"><i class="st">g</i></div><div class="cl" style="top:174.88px;left:680px"><i class="st">g</i></div>
</div></div>

<svg class="abs" style="left:630px;top:310px;width:175px;height:60px" viewBox="630 310 175 60">
  <path d="M697 339.5 659 346.5 660.5 338 638.5 352.3 663.5 361 662 351.5 698.5 344.5z" fill="#e8401c" stroke="#fff" stroke-width="1" stroke-opacity=".6"/>
</svg>
<div class="abs" style="left:702.5px;top:311.5px;font-size:29.5px;letter-spacing:.3px;line-height:36px;font-weight:700;color:#e8411d;white-space:nowrap;-webkit-text-stroke:.9px #e8411d;text-shadow:0 0 2px #fff,0 0 2px #fff">削除後</div>
</body></html>
